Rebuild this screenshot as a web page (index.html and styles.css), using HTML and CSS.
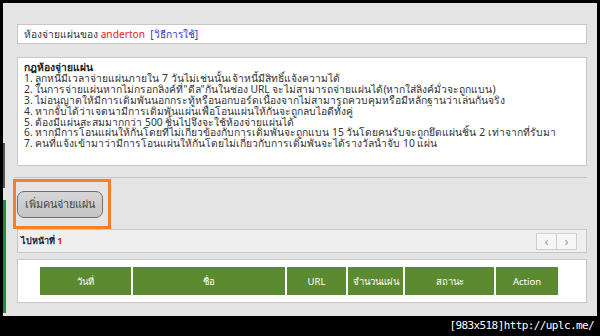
FILE: index.html
```html
<!DOCTYPE html>
<html lang="th">
<head>
    <meta charset="UTF-8">
    <meta name="viewport" content="width=device-width, initial-scale=1.0">
    <title>ห้องจ่ายแผ่น</title>
    <link rel="stylesheet" href="styles.css">
</head>
<body>
<div class="screen">
    <div class="side">
        <div class="side-dark"></div>
        <div class="side-green"></div>
    </div>
    <div class="main">
        <div class="box owner">
            ห้องจ่ายแผ่นของ <span class="red">anderton</span> &nbsp;<a href="#" class="howto">[วิธีการใช้]</a>
        </div>

        <div class="box rules">
            <b>กฎห้องจ่ายแผ่น</b><br>
            1. ลูกหนี้มีเวลาจ่ายแผ่นภายใน 7 วันไม่เช่นนั้นเจ้าหนี้มีสิทธิ์แจ้งความได้<br>
            2. ในการจ่ายแผ่นหากไม่กรอกลิงค์ที่"ดีล"กันในช่อง URL จะไม่สามารถจ่ายแผ่นได้(หากใส่ลิงค์มั่วจะถูกแบน)<br>
            3. ไม่อนุญาตให้มีการเดิมพันนอกกระทู้หรือนอกบอร์ดเนื่องจากไม่สามารถควบคุมหรือมีหลักฐานว่าเล่นกันจริง<br>
            4. หากจับได้ว่าเจตนามีการเดิมพันแผ่นเพื่อโอนแผ่นให้กันจะถูกลบไอดีทั้งคู่<br>
            5. ต้องมีแผ่นสะสมมากกว่า 500 ชิ้นไปจึงจะใช้ห้องจ่ายแผ่นได้<br>
            6. หากมีการโอนแผ่นให้กันโดยที่ไม่เกี่ยวข้องกับการเดิมพันจะถูกแบน 15 วันโดยคนรับจะถูกยึดแผ่นชิ้น 2 เท่าจากที่รับมา<br>
            7. คนที่แจ้งเข้ามาว่ามีการโอนแผ่นให้กันโดยไม่เกี่ยวกับการเดิมพันจะได้รางวัลนำจับ 10 แผ่น
        </div>

        <div class="divider"></div>

        <div class="add-wrap">
            <button class="add-btn">เพิ่มคนจ่ายแผ่น</button>
        </div>

        <div class="pager">
            <span class="goto">ไปหน้าที่ <span class="red">1</span></span>
            <div class="arrows">
                <span class="arrow">&lsaquo;</span>
                <span class="arrow">&rsaquo;</span>
            </div>
        </div>

        <div class="box list">
            <table class="pay-table">
                <tr>
                    <th class="c-date">วันที่</th>
                    <th class="c-name">ชื่อ</th>
                    <th class="c-url">URL</th>
                    <th class="c-count">จำนวนแผ่น</th>
                    <th class="c-status">สถานะ</th>
                    <th class="c-action">Action</th>
                </tr>
            </table>
        </div>
    </div>
</div>
<div class="caption">[983x518]http://uplc.me/</div>
</body>
</html>
```

FILE: styles.css
```css
body {
    margin: 0;
    width: 600px;
    height: 336px;
    background: #000;
    font-family: Tahoma, "Noto Sans", "DejaVu Sans", sans-serif;
    font-size: 10.2px;
    color: #333;
    overflow: hidden;
}

.screen {
    display: flex;
    margin: 3px 3px 0 3px;
    height: 313px;
    background: #e4e4e4;
}

.side {
    width: 9px;
    display: flex;
    flex-direction: column;
    padding-top: 140px;
    box-sizing: border-box;
}

.side-dark {
    width: 2px;
    height: 45px;
    background: #555;
}

.side-green {
    width: 3px;
    height: 113px;
    margin-top: 12px;
    background: #1e8c45;
}

.main {
    flex: 1;
    padding: 21px 10px 0 5px;
}

.box {
    background: #fff;
    border: 1px solid #c8c8c8;
}

.owner {
    height: 18px;
    line-height: 18px;
    padding-left: 6px;
}

.red {
    color: #e8201a;
}

.howto {
    color: #3333cc;
    text-decoration: none;
}

.rules {
    margin-top: 13px;
    height: 98px;
    padding: 4px 6px 5px;
    line-height: 10.9px;
    font-size: 10.3px;
}

.rules b {
    color: #222;
}

.divider {
    margin: 11px 0 0 -3px;
    border-top: 1px solid #c4c4c4;
}

.add-wrap {
    width: 91px;
    height: 44px;
    margin: 1px 0 0 -4px;
    border: 3px solid #f58025;
    display: flex;
    align-items: center;
    padding-left: 1px;
}

.add-btn {
    width: 86px;
    height: 27px;
    padding: 0;
    border: 1px solid #6f6f6f;
    border-radius: 7px;
    background: linear-gradient(#d6d6d6, #c4c4c4);
    font-family: inherit;
    font-size: 10.8px;
    color: #444;
    cursor: pointer;
}

.pager {
    height: 22px;
    background: #efefef;
    border: 1px solid #c8c8c8;
    display: flex;
    align-items: center;
    justify-content: space-between;
    padding: 0 9px 0 3px;
}

.goto {
    font-weight: bold;
    font-size: 9px;
    color: #222;
}

.arrows {
    display: flex;
    border: 1px solid #cfcfcf;
    background: #f6f6f6;
}

.arrow {
    width: 19px;
    height: 15px;
    line-height: 14px;
    text-align: center;
    color: #999;
    font-size: 13px;
}

.arrow + .arrow {
    border-left: 1px solid #cfcfcf;
}

.list {
    margin-top: 6px;
    height: 44px;
    padding: 7px 0 0 22px;
    box-sizing: border-box;
}

.pay-table {
    border-collapse: separate;
    border-spacing: 2px 0;
    margin-left: -2px;
}

.pay-table th {
    height: 28px;
    padding: 0;
    background: #5b8a31;
    color: #fff;
    font-weight: normal;
    font-size: 9.5px;
}

.c-date { width: 91px; }
.c-name { width: 152px; }
.c-url { width: 59px; }
.c-count { width: 55px; }
.c-status { width: 89px; }
.c-action { width: 62px; }

.caption {
    text-align: right;
    padding-right: 6px;
    height: 20px;
    line-height: 20px;
    color: #fff;
    font-family: "DejaVu Sans Mono", monospace;
    font-size: 11px;
    letter-spacing: -0.6px;
}
```
